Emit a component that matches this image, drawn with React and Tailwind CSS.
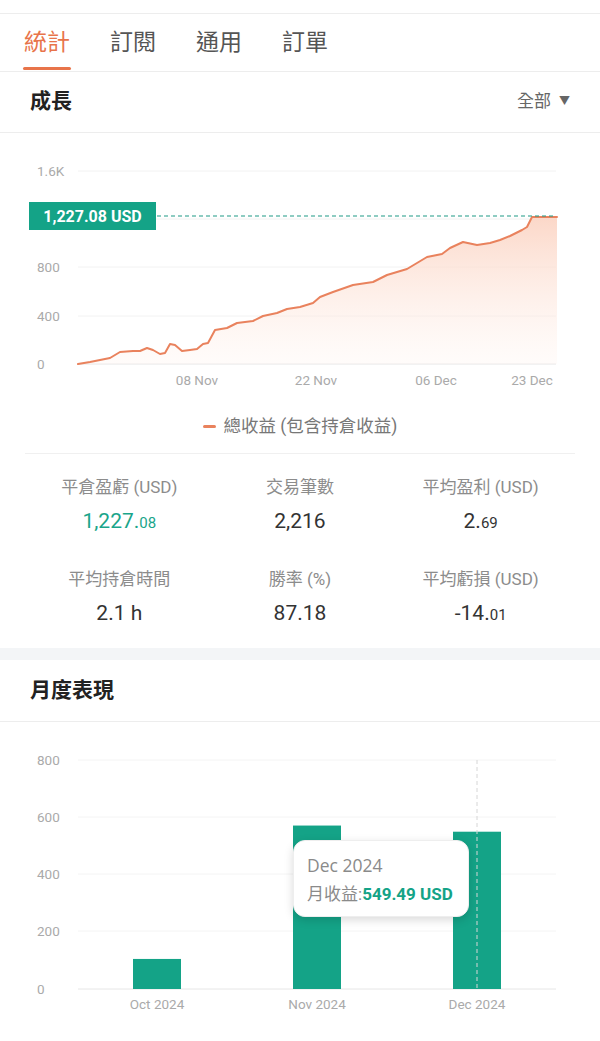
import React from "react";

// --- Stats page (統計 tab) ---

const GREEN = "#14a387";
const ORANGE = "#e9825d";

const tabs = ["統計", "訂閱", "通用", "訂單"];

// growth curve, page pixel coords (x, y)
const growthPoints = [
  [78, 364], [90, 362], [100, 360], [110, 358], [120, 352], [133, 351], [140, 351],
  [147, 348], [153, 350], [160, 354], [165, 353], [170, 344], [175, 345], [182, 351],
  [190, 350], [197, 349], [203, 344], [208, 343], [215, 330], [227, 328], [237, 323],
  [253, 321], [263, 316], [277, 313], [287, 309], [300, 307], [313, 303], [320, 297],
  [333, 292], [353, 285], [373, 282], [387, 275], [407, 269], [417, 263], [427, 257],
  [442, 254], [450, 248], [463, 242], [477, 245], [490, 243], [500, 240], [510, 236],
  [522, 230], [527, 227], [532, 217], [557, 217],
];

const stats = [
  { label: "平倉盈虧 (USD)", int: "1,227.", dec: "08", green: true },
  { label: "交易筆數", int: "2,216" },
  { label: "平均盈利 (USD)", int: "2.", dec: "69" },
  { label: "平均持倉時間", int: "2.1 h" },
  { label: "勝率 (%)", int: "87.18" },
  { label: "平均虧損 (USD)", int: "-14.", dec: "01" },
];

const bars = [
  { label: "Oct 2024", x: 133, value: 105 },
  { label: "Nov 2024", x: 293, value: 571 },
  { label: "Dec 2024", x: 453, value: 549.49 },
];

const GrowthChart = () => {
  const off = 133;
  const pts = growthPoints.map(([x, y]) => `${x},${y - off}`).join(" ");
  const area = `78,${364 - off} ${pts} 557,${364 - off}`;
  const grid = [171, 219, 267, 316, 364];
  const yLabels = [["1.6K", 171], ["800", 267], ["400", 316], ["0", 364]];
  const xLabels = [["08 Nov", 197], ["22 Nov", 316], ["06 Dec", 436], ["23 Dec", 532]];
  return (
    <svg width="600" height="267" className="block">
      <defs>
        <linearGradient id="areaFill" x1="0" y1="0" x2="0" y2="1">
          <stop offset="0%" stopColor="#fbd3c2" stopOpacity="0.9" />
          <stop offset="100%" stopColor="#fff4ef" stopOpacity="0.3" />
        </linearGradient>
      </defs>
      {grid.map((y, i) => (
        <line key={y} x1="78" x2="556" y1={y - off} y2={y - off} stroke={i === 4 ? "#e6e6e6" : "#f2f2f2"} strokeWidth="1" />
      ))}
      {yLabels.map(([t, y]) => (
        <text key={t} x="37" y={y - off + 5} fontSize="13.5" fill="#aaaaaa" fontFamily="Roboto, sans-serif">{t}</text>
      ))}
      {xLabels.map(([t, x]) => (
        <text key={t} x={x} y={247 + 5} fontSize="13.5" fill="#aaaaaa" textAnchor="middle" fontFamily="Roboto, sans-serif">{t}</text>
      ))}
      <polygon points={area} fill="url(#areaFill)" />
      <polyline points={pts} fill="none" stroke={ORANGE} strokeWidth="2" strokeLinejoin="round" strokeLinecap="round" />
      <line x1="157" x2="556" y1="83" y2="83" stroke="#1f9a85" strokeWidth="1.2" strokeDasharray="4 3" />
      <rect x="29" y="69" width="127" height="28" fill={GREEN} />
      <text x="92.5" y="89" fontSize="16" fontWeight="700" fill="#fff" textAnchor="middle" fontFamily="Roboto, sans-serif">1,227.08 USD</text>
    </svg>
  );
};

const MonthlyChart = () => {
  const off = 723;
  const base = 990;
  const perUnit = (990 - 761) / 800;
  const grid = [761, 818, 875, 932, 990];
  const yLabels = ["800", "600", "400", "200", "0"];
  return (
    <div className="relative h-[318px]">
      <svg width="600" height="318" className="block">
        {grid.map((y, i) => (
          <line key={y} x1="78" x2="556" y1={y - off} y2={y - off} stroke={i === 4 ? "#e6e6e6" : "#f4f4f4"} strokeWidth="1" />
        ))}
        {grid.map((y, i) => (
          <text key={y} x="37" y={y - off + 5} fontSize="13.5" fill="#aaaaaa" fontFamily="Roboto, sans-serif">{yLabels[i]}</text>
        ))}
        {bars.map((b) => {
          const h = b.value * perUnit;
          return (
            <g key={b.label}>
              <rect x={b.x} y={base - off - h} width="48" height={h} fill={GREEN} />
              <text x={b.x + 24} y={282 + 5} fontSize="13.5" fill="#aaaaaa" textAnchor="middle" fontFamily="Roboto, sans-serif">{b.label}</text>
            </g>
          );
        })}
        <line x1="477" x2="477" y1={761 - off} y2={base - off} stroke="#d6d6d6" strokeWidth="1" strokeDasharray="4 3" />
      </svg>
      {/* tooltip */}
      <div className="absolute left-[293px] top-[118px] w-[176px] h-[77px] rounded-xl bg-white shadow-[0_3px_10px_rgba(0,0,0,0.15)] border border-[#eeeeee] pl-[13px] pt-[12px]">
        <div className="text-[17.5px] leading-[24px] text-[#8a8a8a] font-['Open_Sans',sans-serif]">Dec 2024</div>
        <div className="text-[17px] leading-[24px] mt-[5px] text-[#8a8a8a] whitespace-nowrap">
          月收益:<span className="font-bold text-[#14a387]">549.49 USD</span>
        </div>
      </div>
    </div>
  );
};

export default function App() {
  return (
    <div className="w-[600px] h-[1041px] overflow-hidden bg-white text-[#333] font-['Roboto','Noto_Sans_CJK_TC',sans-serif]">
      <div className="h-[14px] border-b border-[#ededed]" />

      {/* Tabs */}
      <nav className="h-[58px] flex items-center gap-10 pl-[24px] border-b border-[#ededed]">
        {tabs.map((t, i) => (
          <div key={t} className="relative h-full flex items-center">
            <span className={`text-[23px] leading-none ${i === 0 ? "text-[#e8744a]" : "text-[#555555]"}`}>{t}</span>
            {i === 0 && <span className="absolute bottom-[1px] left-[-1px] w-[48px] h-[3px] rounded-full bg-[#e8744a]" />}
          </div>
        ))}
      </nav>

      {/* Growth */}
      <div className="h-[61px] flex items-center justify-between px-[30px] border-b border-[#ededed]">
        <h2 className="text-[21px] font-bold text-[#222]">成長</h2>
        <button className="flex items-center gap-2 text-[17px] text-[#666]">
          全部
          <span className="text-[11px] text-[#666]">▼</span>
        </button>
      </div>

      <GrowthChart />

      <div className="h-[53px] flex items-center justify-center gap-2 text-[17.5px] text-[#777]">
        <span className="w-[13px] h-[3px] rounded-full bg-[#e9825d]" />
        總收益 (包含持倉收益)
      </div>

      <div className="mx-[25px] border-t border-[#f0f0f0]" />

      <div className="mx-[29px] grid grid-cols-3 gap-y-[31px] pt-[21px] pb-[20px]">
        {stats.map((s) => (
          <div key={s.label} className="flex flex-col items-center">
            <div className="h-[24px] leading-[24px] text-[17px] text-[#8c8c8c] whitespace-nowrap">{s.label}</div>
            <div className={`h-[30px] leading-[30px] mt-[7px] text-[21px] ${s.green ? "text-[#1aa58a]" : "text-[#333]"}`}>
              {s.int}
              {s.dec && <span className="text-[15px]">{s.dec}</span>}
            </div>
          </div>
        ))}
      </div>

      <div className="h-[12px] bg-[#f3f5f7]" />

      {/* Monthly */}
      <div className="h-[62px] flex items-center px-[30px] border-b border-[#ededed]">
        <h2 className="text-[21px] font-bold text-[#222]">月度表現</h2>
      </div>

      <MonthlyChart />
    </div>
  );
}
